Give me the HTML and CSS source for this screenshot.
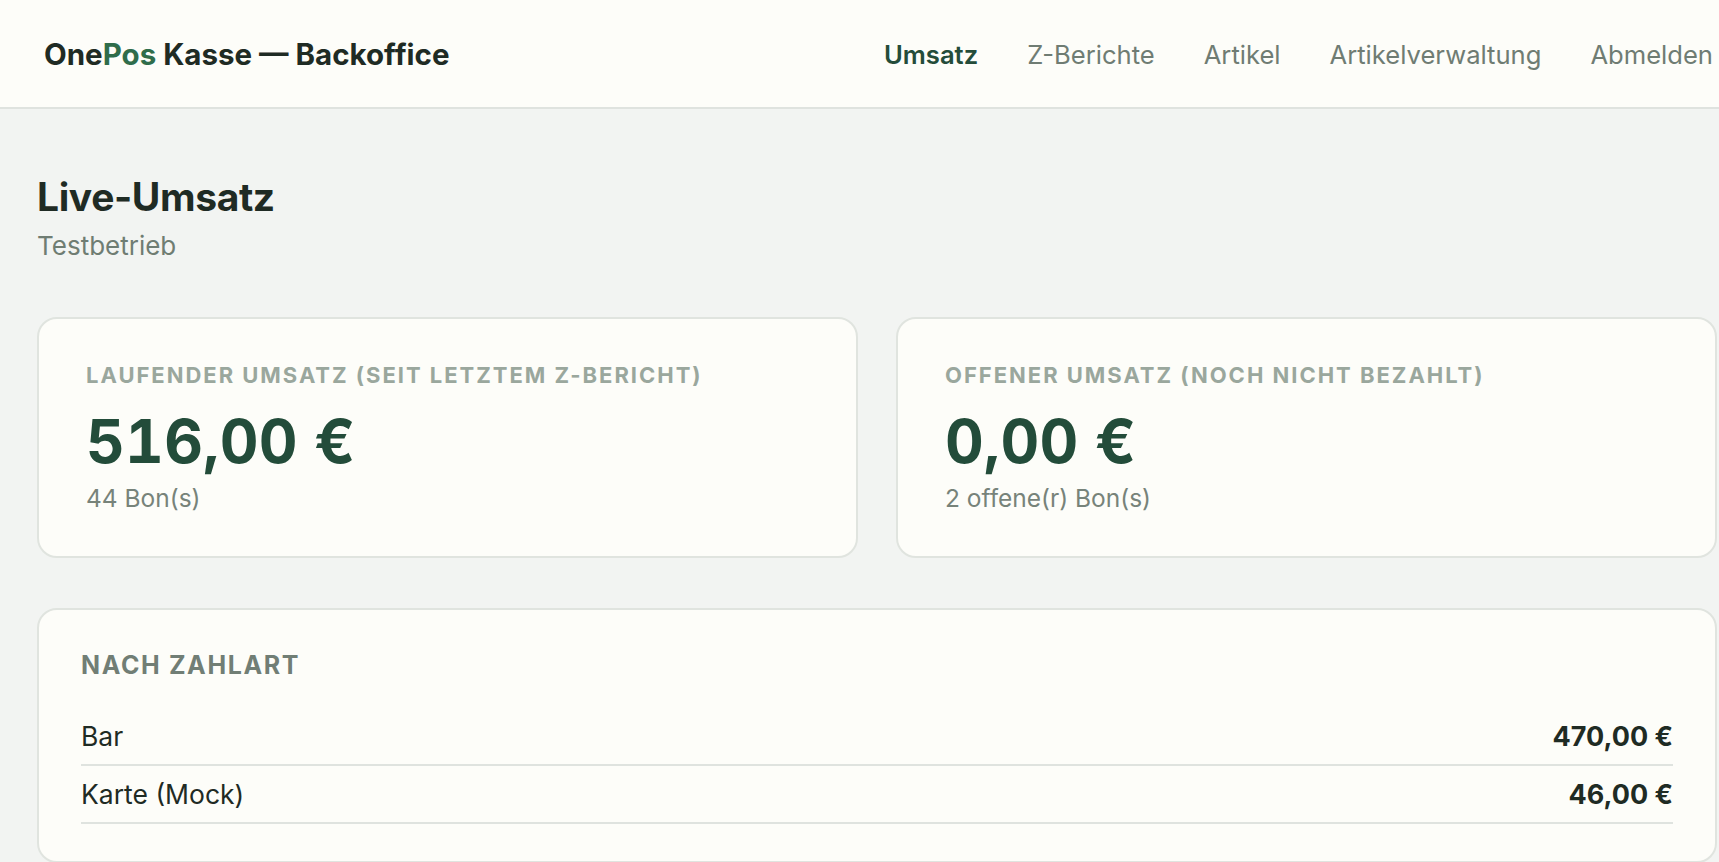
FILE: index.html
```html
<!DOCTYPE html>
<html lang="de">
<head>
<meta charset="utf-8">
<title>OnePos Kasse — Backoffice</title>
<link rel="stylesheet" href="styles.css">
</head>
<body>
<header class="topbar">
  <div class="brand">One<span class="brand-accent">Pos</span> Kasse — Backoffice</div>
  <nav class="nav">
    <a class="nav-link is-active" href="#">Umsatz</a>
    <a class="nav-link" href="#">Z-Berichte</a>
    <a class="nav-link" href="#">Artikel</a>
    <a class="nav-link" href="#">Artikelverwaltung</a>
    <a class="nav-link" href="#">Abmelden</a>
  </nav>
</header>
<main class="page">
  <h1 class="page-title">Live-Umsatz</h1>
  <p class="page-subtitle">Testbetrieb</p>

  <section class="stats">
    <div class="card stat">
      <div class="stat-label">Laufender Umsatz (seit letztem Z-Bericht)</div>
      <div class="stat-value">516,00 €</div>
      <div class="stat-sub">44 Bon(s)</div>
    </div>
    <div class="card stat">
      <div class="stat-label">Offener Umsatz (noch nicht bezahlt)</div>
      <div class="stat-value">0,00 €</div>
      <div class="stat-sub">2 offene(r) Bon(s)</div>
    </div>
  </section>

  <section class="card breakdown">
    <h2 class="section-label">Nach Zahlart</h2>
    <div class="row">
      <span class="row-name">Bar</span>
      <span class="row-amount">470,00 €</span>
    </div>
    <div class="row">
      <span class="row-name">Karte (Mock)</span>
      <span class="row-amount">46,00 €</span>
    </div>
  </section>
</main>
</body>
</html>
```

FILE: styles.css
```css
* {
  box-sizing: border-box;
}

html, body {
  margin: 0;
  padding: 0;
}

body {
  font-family: Inter, "Noto Sans", "Liberation Sans", sans-serif;
  background: #f2f4f2;
  color: #1f2b24;
  overflow: hidden;
}

.topbar {
  height: 109px;
  background: #fdfdf9;
  border-bottom: 2px solid #dfe3df;
  display: flex;
  align-items: center;
  justify-content: space-between;
  padding: 3px 6px 0 44px;
}

.brand {
  font-size: 29.5px;
  font-weight: 700;
  color: #1f2b24;
  line-height: 1.2;
}

.brand-accent {
  color: #2f6d4b;
}

.nav {
  display: flex;
  align-items: center;
  gap: 49px;
}

.nav-link {
  font-size: 25.6px;
  line-height: 1.2;
  color: #6f7c73;
  text-decoration: none;
}

.nav-link.is-active {
  color: #244c3a;
  font-weight: 600;
}

.page {
  padding: 64px 2px 0 37px;
}

.page-title {
  margin: 0;
  font-size: 39px;
  line-height: 48px;
  font-weight: 700;
  letter-spacing: -0.01em;
  color: #1f2b24;
}

.page-subtitle {
  margin: 9px 0 0;
  font-size: 26px;
  line-height: 31px;
  color: #6f7d73;
}

.stats {
  margin-top: 56px;
  display: grid;
  grid-template-columns: 1fr 1fr;
  gap: 38px;
}

.card {
  background: #fdfdf9;
  border: 2px solid #e0e4df;
  border-radius: 20px;
}

.stat {
  padding: 44px 48px 42px 47px;
}

.stat-label {
  font-size: 22px;
  line-height: 25px;
  font-weight: 700;
  letter-spacing: 0.09em;
  text-transform: uppercase;
  color: #9aa79d;
}

.stat-value {
  margin-top: 21px;
  font-size: 60px;
  line-height: 65px;
  font-weight: 700;
  letter-spacing: 0.005em;
  font-variant-numeric: tabular-nums;
  color: #234c3a;
}

.stat-sub {
  margin-top: 9px;
  font-size: 24.5px;
  line-height: 31px;
  color: #77837a;
}

.breakdown {
  margin-top: 50px;
  padding: 40px 42px 37px 42px;
}

.section-label {
  margin: 0 0 28px;
  font-size: 25px;
  line-height: 30px;
  font-weight: 700;
  letter-spacing: 0.065em;
  text-transform: uppercase;
  color: #717e75;
}

.row {
  display: flex;
  justify-content: space-between;
  align-items: center;
  padding: 13px 0 12px;
  border-bottom: 2px solid #dfe3df;
  font-size: 26.5px;
  line-height: 31px;
}

.row-name {
  color: #1f2b24;
}

.row-amount {
  font-size: 27px;
  font-weight: 700;
  color: #1f2b24;
}
```
